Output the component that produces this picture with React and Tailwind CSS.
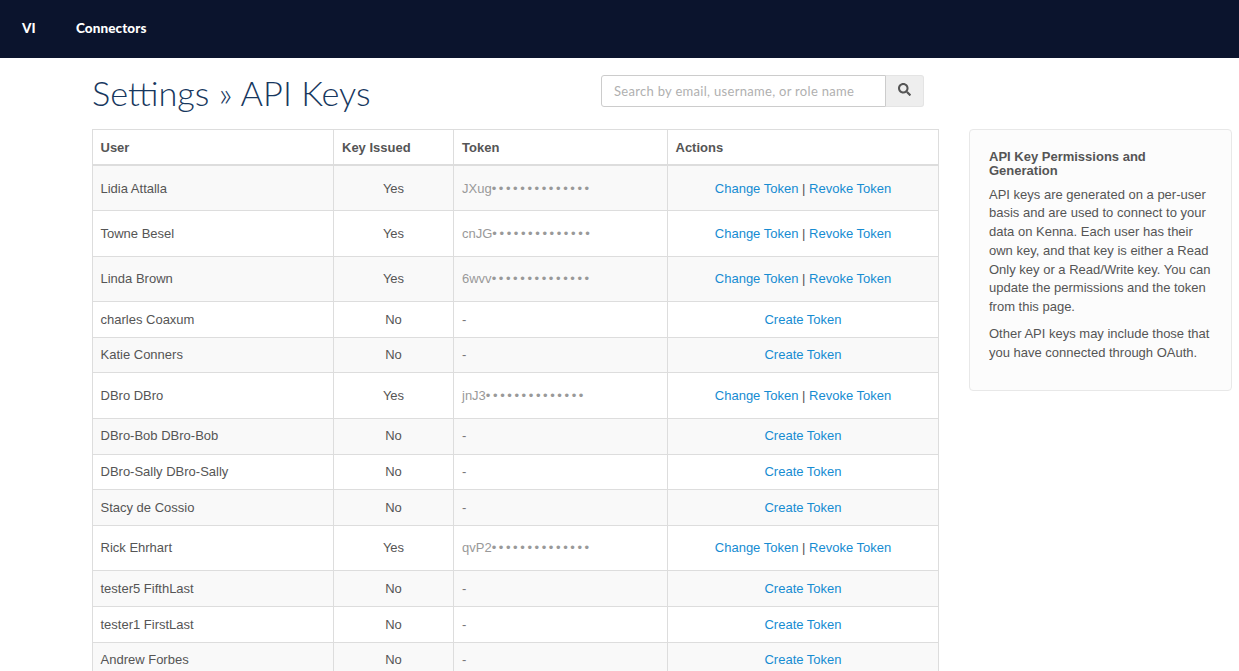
import { FaSearch } from "react-icons/fa";

const users = [
  { name: "Lidia Attalla", token: "JXug" },
  { name: "Towne Besel", token: "cnJG" },
  { name: "Linda Brown", token: "6wvv" },
  { name: "charles Coaxum" },
  { name: "Katie Conners" },
  { name: "DBro DBro", token: "jnJ3" },
  { name: "DBro-Bob DBro-Bob" },
  { name: "DBro-Sally DBro-Sally" },
  { name: "Stacy de Cossio" },
  { name: "Rick Ehrhart", token: "qvP2" },
  { name: "tester5 FifthLast" },
  { name: "tester1 FirstLast" },
  { name: "Andrew Forbes" },
];

function Row({ user, index }) {
  const issued = !!user.token;
  return (
    <tr className={`${issued ? "h-[45.4px]" : "h-[35.7px]"} ${index % 2 === 0 ? "bg-[#f9f9f9]" : "bg-white"}`}>
      <td className="border border-[#dddddd] px-[7.5px] py-0">{user.name}</td>
      <td className="border border-[#dddddd] px-2 py-0 text-center">{issued ? "Yes" : "No"}</td>
      <td className="border border-[#dddddd] px-2 py-0 text-[#999999]">
        {issued ? (
          <>
            {user.token}
            <span className="tracking-[2.6px]">{"•".repeat(14)}</span>
          </>
        ) : (
          <span className="text-[#777777]">-</span>
        )}
      </td>
      <td className="border border-[#dddddd] px-2 py-0 text-center">
        {issued ? (
          <>
            <a className="text-[#168cd2]">Change Token</a> | <a className="text-[#168cd2]">Revoke Token</a>
          </>
        ) : (
          <a className="text-[#168cd2]">Create Token</a>
        )}
      </td>
    </tr>
  );
}

export default function App() {
  return (
    <div className="h-[671px] overflow-hidden bg-white font-['Liberation_Sans',Arial,sans-serif] text-[13px] text-[#555555]">
      <div className="flex h-[58px] items-center bg-[#0b142d] pb-[1px] font-['Lato',sans-serif] text-[13.5px] font-black tracking-[0.1px] text-white">
        <span className="ml-[22px] w-[54px]">VI</span>
        <span>Connectors</span>
      </div>

      <div className="flex pl-[92px]">
        <div className="w-[846px]">
          <div className="flex h-[71px] items-start justify-between pr-[14px]">
            <h1 className="mt-[14px] font-['Lato',sans-serif] text-[34.3px] leading-[42px] font-light text-[#17375e]">Settings » API Keys</h1>
            <div className="mt-[17px] flex h-[32px] w-[323px]">
              <input
                placeholder="Search by email, username, or role name"
                className="h-full w-[285px] rounded-l-[3px] border border-[#cccccc] px-3 font-['Lato',sans-serif] text-[13px] tracking-[0.3px] text-[#555555] outline-none placeholder:text-[#b0b0b0]"
              />
              <div className="flex flex-1 items-center justify-center rounded-r-[3px] border border-l-0 border-[#e4e4e4] bg-[#eeeeee]">
                <FaSearch className="mb-[4px] h-[13px] w-[13px] text-[#555555]" />
              </div>
            </div>
          </div>

          <table className="w-[846px] table-fixed border-collapse">
            <colgroup>
              <col className="w-[241px]" />
              <col className="w-[120px]" />
              <col className="w-[214px]" />
              <col className="w-[271px]" />
            </colgroup>
            <thead>
              <tr className="h-[35.95px] text-left font-bold">
                <th className="border border-b-2 border-[#dddddd] px-[7.5px] pt-[1px] pb-0">User</th>
                <th className="border border-b-2 border-[#dddddd] px-2 pt-[1px] pb-0">Key Issued</th>
                <th className="border border-b-2 border-[#dddddd] px-2 pt-[1px] pb-0">Token</th>
                <th className="border border-b-2 border-[#dddddd] px-[7.5px] pt-[1px] pb-0">Actions</th>
              </tr>
            </thead>
            <tbody>
              {users.map((user, i) => (
                <Row key={user.name} user={user} index={i} />
              ))}
            </tbody>
          </table>
        </div>

        <div className="mt-[71px] ml-[31px] h-[262px] w-[263px] rounded-[4px] border border-[#e8e8e8] bg-[#fcfcfc] px-[19px] pt-[20px]">
          <h4 className="text-[13px] leading-[14px] font-bold">API Key Permissions and Generation</h4>
          <p className="mt-[7.5px] text-[13px] leading-[18.8px]">
            API keys are generated on a per-user basis and are used to connect to your data on Kenna. Each user has their own key, and that key is either a Read Only key or a Read/Write key. You can update the permissions and the token from this page.
          </p>
          <p className="mt-[8px] text-[13px] leading-[18.8px]">
            Other API keys may include those that you have connected through OAuth.
          </p>
        </div>
      </div>
    </div>
  );
}
